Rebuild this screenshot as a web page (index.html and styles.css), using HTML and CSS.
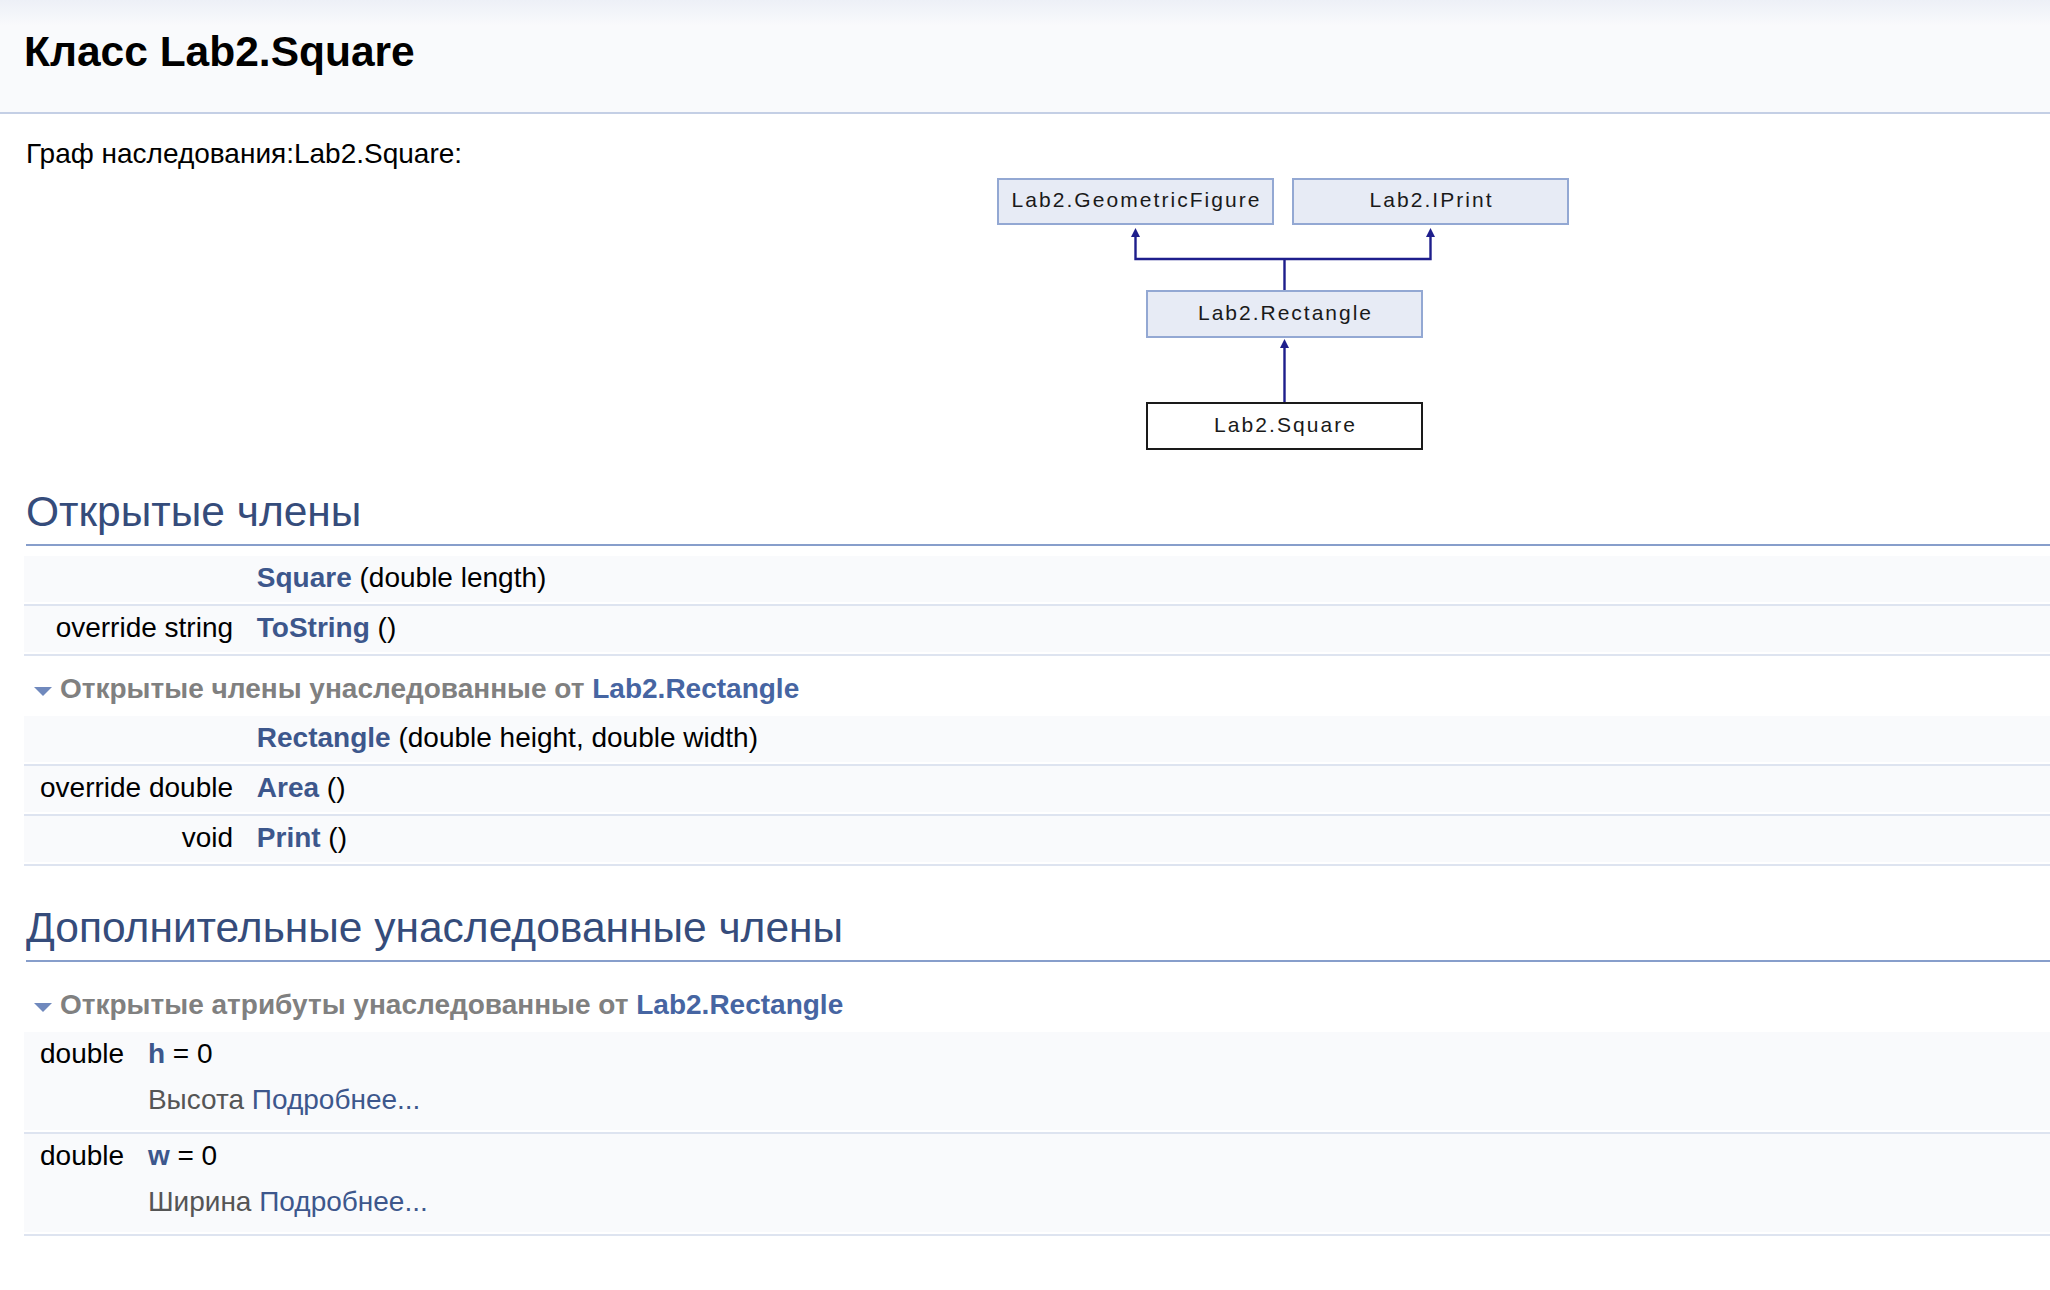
FILE: index.html
```html
<!DOCTYPE html>
<html lang="ru">
<head>
<meta charset="utf-8">
<title>Lab2.Square</title>
<link rel="stylesheet" href="styles.css">
</head>
<body>
<div class="header">
  <div class="title">Класс Lab2.Square</div>
</div>
<div class="contents">
  <div class="dynheader">Граф наследования:Lab2.Square:</div>
  <div class="diagram">
    <svg width="580" height="274" viewBox="0 0 580 274" xmlns="http://www.w3.org/2000/svg">
      <g class="edge">
        <path d="M141.5,60 V83 H436.5 V60 M290.5,83 V115 M290.5,171 V227" fill="none" stroke="#1e1e8c" stroke-width="2.4"/>
        <polygon points="141.5,52 137,61 146,61" fill="#1e1e8c"/>
        <polygon points="436.5,52 432,61 441,61" fill="#1e1e8c"/>
        <polygon points="290.5,163 286,172 295,172" fill="#1e1e8c"/>
      </g>
      <rect class="node" x="4" y="3" width="275" height="45"/>
      <text class="nodetext" x="141.5" y="30.5" text-anchor="middle" textLength="248" lengthAdjust="spacing">Lab2.GeometricFigure</text>
      <rect class="node" x="299" y="3" width="275" height="45"/>
      <text class="nodetext" x="436.5" y="30.5" text-anchor="middle" textLength="122" lengthAdjust="spacing">Lab2.IPrint</text>
      <rect class="node" x="153" y="115" width="275" height="46"/>
      <text class="nodetext" x="290.5" y="143.5" text-anchor="middle" textLength="173" lengthAdjust="spacing">Lab2.Rectangle</text>
      <rect class="node current" x="153" y="227" width="275" height="46"/>
      <text class="nodetext" x="290.5" y="255.5" text-anchor="middle" textLength="141" lengthAdjust="spacing">Lab2.Square</text>
    </svg>
  </div>

  <table class="memberdecls">
    <tr class="heading"><td colspan="2"><h2 class="groupheader">Открытые члены</h2></td></tr>
    <tr><td class="mleft">&#160;</td><td class="mright"><a class="el">Square</a> (double length)</td></tr>
    <tr class="sep"><td colspan="2"></td></tr>
    <tr><td class="mleft">override string&#160;</td><td class="mright"><a class="el">ToString</a> ()</td></tr>
    <tr class="sep"><td colspan="2"></td></tr>
    <tr class="inherit_header"><td colspan="2"><svg class="arrow" width="18" height="9" viewBox="0 0 18 9"><polygon points="0,0 18,0 9,9" fill="#7089bd"/></svg>Открытые члены унаследованные от <a class="el visited">Lab2.Rectangle</a></td></tr>
    <tr><td class="mleft">&#160;</td><td class="mright"><a class="el">Rectangle</a> (double height, double width)</td></tr>
    <tr class="sep"><td colspan="2"></td></tr>
    <tr><td class="mleft">override double&#160;</td><td class="mright"><a class="el">Area</a> ()</td></tr>
    <tr class="sep"><td colspan="2"></td></tr>
    <tr><td class="mleft">void&#160;</td><td class="mright"><a class="el">Print</a> ()</td></tr>
    <tr class="sep"><td colspan="2"></td></tr>
  </table>

  <table class="memberdecls">
    <tr class="heading"><td colspan="2"><h2 class="groupheader">Дополнительные унаследованные члены</h2></td></tr>
    <tr class="inherit_header"><td colspan="2"><svg class="arrow" width="18" height="9" viewBox="0 0 18 9"><polygon points="0,0 18,0 9,9" fill="#7089bd"/></svg>Открытые атрибуты унаследованные от <a class="el visited">Lab2.Rectangle</a></td></tr>
    <tr><td class="mleft">double&#160;</td><td class="mright"><a class="el">h</a> = 0</td></tr>
    <tr><td class="dleft">&#160;</td><td class="dright">Высота <a>Подробнее...</a></td></tr>
    <tr class="sep"><td colspan="2"></td></tr>
    <tr><td class="mleft">double&#160;</td><td class="mright"><a class="el">w</a> = 0</td></tr>
    <tr><td class="dleft">&#160;</td><td class="dright">Ширина <a>Подробнее...</a></td></tr>
    <tr class="sep"><td colspan="2"></td></tr>
  </table>
</div>
</body>
</html>
```
FILE: styles.css
```css
html, body {
  margin: 0;
  padding: 0;
  background: #ffffff;
}
body {
  font-family: "Liberation Sans", Arial, Helvetica, sans-serif;
  font-size: 28px;
  line-height: 44px;
  color: #000000;
}
.header {
  background: linear-gradient(#edf0f7 0, #f9fafc 26px) #f9fafc;
  border-bottom: 2px solid #c4cfe5;
  padding: 24px 0 32px 24px;
}
.title {
  font-size: 42.5px;
  line-height: 56px;
  font-weight: bold;
}
.contents {
  padding-left: 24px;
}
.dynheader {
  margin-top: 18px;
  padding-left: 2px;
}
.diagram {
  margin-left: 970px;
  line-height: 0;
}
.diagram svg {
  display: block;
}
.node {
  fill: #e7ebf5;
  stroke: #93a8d3;
  stroke-width: 2;
}
.node.current {
  fill: #ffffff;
  stroke: #1a1a1a;
}
.nodetext {
  font-family: "Liberation Sans", Arial, sans-serif;
  font-size: 21px;
  fill: #1a1a1a;
}
table.memberdecls {
  width: 100%;
  border-spacing: 0;
  padding: 0;
}
table.memberdecls td {
  padding: 0;
  font-size: 28px;
  line-height: 44px;
}
.heading td {
  padding: 0 0 0 2px !important;
}
h2.groupheader {
  margin: 24px 0 10px 0;
  padding: 16px 0 10px 0;
  border-bottom: 2px solid #879ecb;
  color: #354c7b;
  font-size: 42.5px;
  line-height: 44px;
  font-weight: normal;
}
a {
  color: #3d578c;
  text-decoration: none;
}
a.el {
  font-weight: bold;
}
a.visited {
  color: #4665a2;
}
td.mleft {
  padding: 0 0 2px 16px !important;
  text-align: right;
  white-space: nowrap;
  vertical-align: top;
  background: #f9fafc;
}
td.mright {
  width: 100%;
  padding: 0 0 2px 16px !important;
  background: #f9fafc;
}
td.dleft {
  padding: 0 16px 8px 16px !important;
  background: #f9fafc;
}
td.dright {
  padding: 0 16px 8px 16px !important;
  background: #f9fafc;
  color: #555555;
}
.sep td {
  height: 2px;
  line-height: 0 !important;
  font-size: 0 !important;
  border-bottom: 2px solid #dee4f0;
  background: #ffffff;
}
.inherit_header td {
  padding: 11px 0 5px 10px !important;
  font-weight: bold;
  color: #808080;
}
.arrow {
  vertical-align: 2px;
  margin-right: 8px;
}
```
